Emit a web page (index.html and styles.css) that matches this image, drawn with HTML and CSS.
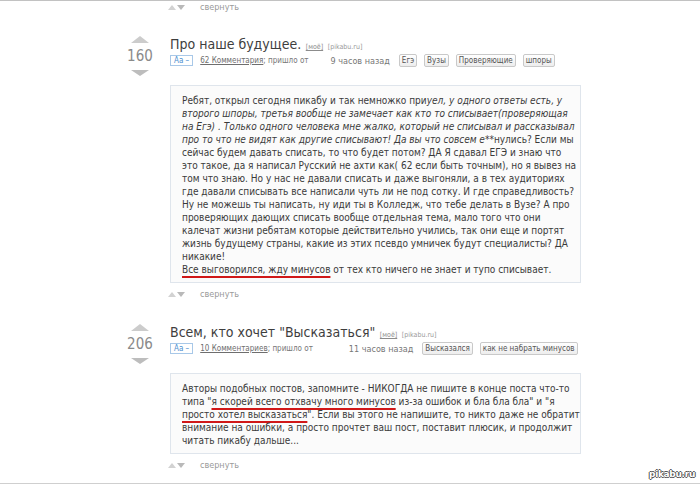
FILE: index.html
```html
<!DOCTYPE html>
<html lang="ru">
<head>
<meta charset="utf-8">
<title>pikabu</title>
<link rel="stylesheet" href="styles.css">
</head>
<body>
<div class="page">
  <div class="feed">
    <div class="collapse lead">
      <span class="s-up"></span><span class="s-down"></span><span class="collapse-text">свернуть</span>
    </div>

    <div class="post">
      <div class="rating">
        <span class="v-up"></span>
        <div class="score">160</div>
        <span class="v-down"></span>
      </div>
      <div class="content">
        <div class="title-row">
          <span class="title">Про наше будущее.</span>
          <span class="mine">[моё]</span>
          <span class="src">[pikabu.ru]</span>
        </div>
        <div class="meta">
          <span class="fontsz">Аа –</span>
          <span class="comments">62 Комментария</span><span class="from">; пришло от</span><span class="author author-a"></span><span class="time">9 часов назад</span>
          <span class="tags">
            <span class="tag">Егэ</span>
            <span class="tag">Вузы</span>
            <span class="tag">Проверяющие</span>
            <span class="tag">шпоры</span>
          </span>
        </div>
        <div class="story">
          Ребят, открыл сегодня пикабу и так немножко при<em>уел, у одного ответы есть, у<br>второго шпоры, третья вообще не замечает как кто то списывает(проверяющая<br>на Егэ) . Только одного человека мне жалко, который не списывал и рассказывал<br>про то что не видят как другие списывают! Да вы что совсем е</em>**нулись? Если мы<br>сейчас будем давать списать, то что будет потом? ДА Я сдавал ЕГЭ и знаю что<br>это такое, да я написал Русский не ахти как( 62 если быть точным), но я вывез на<br>том что знаю. Но у нас не давали списать и даже выгоняли, а в тех аудиториях<br>где давали списывать все написали чуть ли не под сотку. И где справедливость?<br>Ну не можешь ты написать, ну иди ты в Колледж, что тебе делать в Вузе? А про<br>проверяющих дающих списать вообще отдельная тема, мало того что они<br>калечат жизни ребятам которые действительно учились, так они еще и портят<br>жизнь будущему страны, какие из этих псевдо умничек будут специалисты? ДА<br>никакие!<br><span class="mark">Все выговорился, жду минусов</span> от тех кто ничего не знает и тупо списывает.
        </div>
        <div class="collapse">
          <span class="s-up"></span><span class="s-down"></span><span class="collapse-text">свернуть</span>
        </div>
      </div>
    </div>

    <div class="post">
      <div class="rating">
        <span class="v-up"></span>
        <div class="score">206</div>
        <span class="v-down"></span>
      </div>
      <div class="content">
        <div class="title-row">
          <span class="title">Всем, кто хочет "Высказаться"</span>
          <span class="mine">[моё]</span>
          <span class="src">[pikabu.ru]</span>
        </div>
        <div class="meta">
          <span class="fontsz">Аа –</span>
          <span class="comments">10 Комментариев</span><span class="from">; пришло от</span><span class="author author-b"></span><span class="time">11 часов назад</span>
          <span class="tags">
            <span class="tag">Высказался</span>
            <span class="tag">как не набрать минусов</span>
          </span>
        </div>
        <div class="story">
          Авторы подобных постов, запомните - НИКОГДА не пишите в конце поста что-то<br>типа "<span class="mark">я скорей всего отхвачу много минусов</span> из-за ошибок и бла бла бла" и "я<br><span class="mark">просто хотел высказаться</span>". Если вы этого не напишите, то никто даже не обратит<br>внимание на ошибки, а просто прочтет ваш пост, поставит плюсик, и продолжит<br>читать пикабу дальше...
        </div>
        <div class="collapse">
          <span class="s-up"></span><span class="s-down"></span><span class="collapse-text">свернуть</span>
        </div>
      </div>
    </div>
  </div>
  <div class="watermark">pikabu.ru</div>
</div>
</body>
</html>
```

FILE: styles.css
```css
* {
  box-sizing: border-box;
}

html, body {
  margin: 0;
  padding: 0;
  background: #ffffff;
}

body {
  font-family: "DejaVu Sans Condensed", "DejaVu Sans", sans-serif;
  color: #333333;
}

.page {
  position: relative;
  height: 484px;
  border-top: 1px solid #c2c2c2;
  border-bottom: 1px solid #cfcfcf;
  overflow: hidden;
}

.feed {
  padding-left: 118px;
}

/* collapse row */
.collapse {
  display: flex;
  align-items: center;
  height: 12px;
  margin-left: -2px;
  margin-top: 5px;
}

.collapse.lead {
  margin-left: 50px;
  margin-top: 0;
}

.s-up {
  width: 0;
  height: 0;
  border-left: 4px solid transparent;
  border-right: 4px solid transparent;
  border-bottom: 5px solid #d2d2d2;
}

.s-down {
  width: 0;
  height: 0;
  margin-left: 1px;
  border-left: 4px solid transparent;
  border-right: 4px solid transparent;
  border-top: 5px solid #b9b9b9;
}

.collapse-text {
  margin-left: 15px;
  font-size: 9px;
  line-height: 12px;
  color: #9a9a9a;
}

/* post */
.post {
  display: flex;
  margin-top: 23px;
}

.post + .post {
  margin-top: 24px;
}

.rating {
  width: 44px;
  margin-right: 8px;
  display: flex;
  flex-direction: column;
  align-items: center;
}

.v-up {
  width: 0;
  height: 0;
  border-left: 9px solid transparent;
  border-right: 9px solid transparent;
  border-bottom: 7px solid #cccccc;
}

.v-down {
  width: 0;
  height: 0;
  margin-top: 6px;
  border-left: 9px solid transparent;
  border-right: 9px solid transparent;
  border-top: 6px solid #bdbdbd;
}

.score {
  margin-top: 5px;
  font-size: 15px;
  line-height: 16px;
  color: #8a8a8a;
}

.content {
  width: 411px;
}

.title-row {
  height: 16px;
  line-height: 16px;
  white-space: nowrap;
}

.title {
  font-size: 14px;
  color: #3e3e3e;
}

.mine {
  font-size: 7px;
  color: #8c8c8c;
  text-decoration: underline;
}

.src {
  font-size: 7px;
  color: #9a9a9a;
}

.meta {
  display: flex;
  align-items: center;
  height: 13px;
  margin-top: 2px;
  font-size: 8px;
  color: #777777;
  white-space: nowrap;
}

.fontsz {
  display: inline-flex;
  align-items: center;
  height: 11px;
  padding: 0 3px;
  border: 1px solid #a8c8e8;
  color: #4c8fcf;
  font-size: 8px;
  margin-right: 7px;
}

.comments {
  color: #6e6e6e;
  text-decoration: underline;
}

.author {
  display: inline-block;
}

.author-a {
  width: 22px;
}

.author-b {
  width: 36px;
}

.time {
  font-size: 9px;
  color: #777777;
}

.tags {
  display: flex;
  gap: 7px;
  margin-left: 9px;
}

.tag {
  display: inline-flex;
  align-items: center;
  height: 13px;
  padding: 0 2px;
  border: 1px solid #c9c9c9;
  border-radius: 2px;
  background: linear-gradient(#ffffff, #ededed);
  color: #555555;
  font-size: 8px;
}

.story {
  margin-top: 18px;
  padding: 8px 11px 6px 11px;
  border: 1px solid #dfe5ec;
  background: #fbfbfb;
  font-size: 10px;
  line-height: 13px;
  color: #3a3a3a;
  white-space: nowrap;
}

.story em {
  font-style: italic;
}

.mark {
  text-decoration: underline;
  text-decoration-color: #d01818;
  text-decoration-thickness: 2px;
  text-underline-offset: 3px;
}

.watermark {
  position: absolute;
  right: 5px;
  top: 468px;
  font-family: "DejaVu Sans", sans-serif;
  font-weight: bold;
  font-size: 9px;
  line-height: 11px;
  letter-spacing: -0.3px;
  color: #ffffff;
  text-shadow: 1px 0 0 #555, -1px 0 0 #555, 0 1px 0 #555, 0 -1px 0 #555;
}
```
